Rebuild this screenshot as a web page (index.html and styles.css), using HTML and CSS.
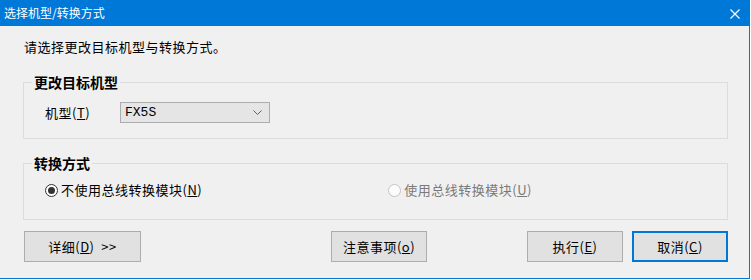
FILE: index.html
```html
<!DOCTYPE html>
<html lang="zh-CN">
<head>
  <meta charset="UTF-8" />
  <title>选择机型/转换方式</title>
  <link rel="stylesheet" href="styles.css">
</head>
<body>
  <div class="window">
    <div class="titlebar">
      <span class="title">选择机型/转换方式</span>
      <span class="close">
        <svg width="10" height="10" viewBox="0 0 10 10"><path d="M0.5 0.5L9.5 9.5M9.5 0.5L0.5 9.5" stroke="#fff" stroke-width="1.2" fill="none"/></svg>
      </span>
    </div>
    <div class="content">
      <p class="intro">请选择更改目标机型与转换方式。</p>

      <div class="group group-model">
        <div class="group-title">更改目标机型</div>
        <div class="row">
          <span class="label">机型(<u>T</u>)</span>
          <div class="select">
            <span class="select-value">FX5S</span>
            <svg width="9" height="5" viewBox="0 0 9 5"><path d="M0.5 0.5L4.5 4.5L8.5 0.5" stroke="#606060" fill="none"/></svg>
          </div>
        </div>
      </div>

      <div class="group group-mode">
        <div class="group-title">转换方式</div>
        <div class="row">
          <span class="radio checked"><span class="dot"></span></span>
          <span class="radio-text">不使用总线转换模块(<u>N</u>)</span>
          <span class="radio disabled second"></span>
          <span class="radio-text disabled-text">使用总线转换模块(<u>U</u>)</span>
        </div>
      </div>

      <div class="buttons">
        <button class="btn btn-detail">详细(<u>D</u>)&nbsp;&nbsp;&gt;&gt;</button>
        <button class="btn btn-notes">注意事项(<u>o</u>)</button>
        <button class="btn btn-run">执行(<u>E</u>)</button>
        <button class="btn btn-cancel">取消(<u>C</u>)</button>
      </div>
    </div>
  </div>
</body>
</html>
```

FILE: styles.css
```css
body { margin: 0; background: #fff; font-family: "Noto Sans CJK SC", "Noto Sans", sans-serif; font-size: 13px; color: #000; }
.window { width: 749px; height: 278px; background: #f0f0f0; border-right: 1px solid #0078d7; border-bottom: 1px solid #0078d7; }
.titlebar { height: 26px; background: #0078d7; color: #fff; display: flex; align-items: center; padding-left: 4px; font-size: 12px; }
.title { flex: 1; line-height: 16px; }
.close { width: 10px; height: 10px; margin-right: 9px; display: flex; margin-top: 1px; }
.content { padding: 0 21px 0 23px; }
.intro { margin: 13px 0 0 1px; line-height: 16px; height: 16px; letter-spacing: 0.5px; }
.group { height: 57px; box-sizing: border-box; border: 1px solid #dcdcdc; padding-left: 21px; }
.group-title { display: table; margin: -9px 0 0 -13px; padding: 0 2px; background: #f0f0f0; font-size: 14px; font-weight: bold; line-height: 16px; }
.group-model { margin-top: 27px; }
.group-mode { margin-top: 24px; }
.row { display: flex; align-items: center; }
.group-model .row { margin-top: 12px; }
.group-mode .row { margin-top: 11px; }
.label { width: 75px; line-height: 16px; letter-spacing: 0.5px; }
.select { width: 137px; height: 19px; border: 1px solid #adadad; background: #e5e5e5; display: flex; align-items: center; justify-content: space-between; padding: 0 7px 0 4px; }
.select-value { font-family: "Liberation Mono", monospace; font-size: 13px; }
.radio { width: 11px; height: 11px; border: 1px solid #333; border-radius: 50%; background: #fff; display: flex; align-items: center; justify-content: center; }
.radio .dot { width: 7px; height: 7px; border-radius: 50%; background: #333; }
.radio.disabled { border-color: #c4c4c4; background: #fcfcfc; }
.radio.second { margin-left: 186px; }
.radio-text { margin-left: 3px; line-height: 16px; letter-spacing: 0.5px; }
.disabled-text { color: #7a7a7a; }
.buttons { display: flex; margin-top: 11px; padding-left: 1px; }
.btn { height: 31px; padding: 0; font-family: inherit; font-size: 13px; letter-spacing: 0.5px; color: #000; background: #e1e1e1; border: 1px solid #adadad; width: 96px; }
.btn-detail { width: 117px; }
.btn-notes { margin-left: 190px; }
.btn-run { margin-left: auto; }
.btn-cancel { margin-left: 9px; border: 2px solid #0078d7; }
```
